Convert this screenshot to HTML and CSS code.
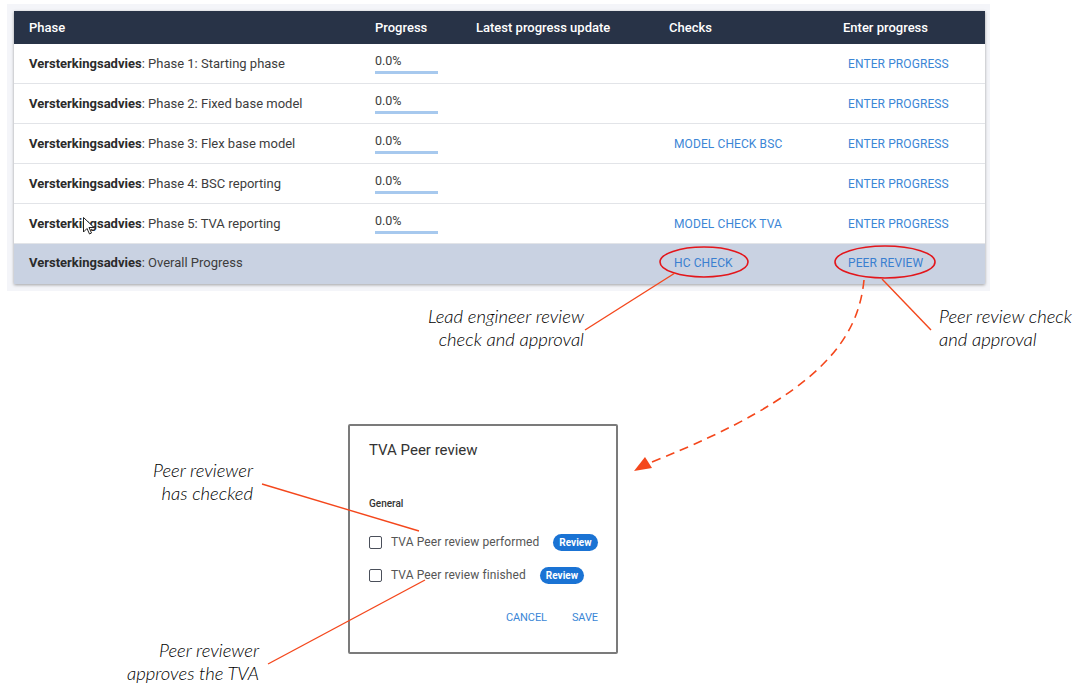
FILE: index.html
```html
<!DOCTYPE html>
<html lang="en">
<head>
<meta charset="utf-8">
<title>Phase progress</title>
<link rel="stylesheet" href="styles.css">
</head>
<body>
<div class="canvas">
  <div class="panel">
    <div class="table">
      <div class="row head">
        <div class="cell">Phase</div>
        <div class="cell">Progress</div>
        <div class="cell">Latest progress update</div>
        <div class="cell">Checks</div>
        <div class="cell">Enter progress</div>
      </div>
      <div class="row">
        <div class="cell"><b>Versterkingsadvies</b>: Phase 1: Starting phase</div>
        <div class="cell prog"><span>0.0%</span><i class="bar"></i></div>
        <div class="cell"></div>
        <div class="cell"></div>
        <div class="cell"><a class="link">ENTER PROGRESS</a></div>
      </div>
      <div class="row">
        <div class="cell"><b>Versterkingsadvies</b>: Phase 2: Fixed base model</div>
        <div class="cell prog"><span>0.0%</span><i class="bar"></i></div>
        <div class="cell"></div>
        <div class="cell"></div>
        <div class="cell"><a class="link">ENTER PROGRESS</a></div>
      </div>
      <div class="row">
        <div class="cell"><b>Versterkingsadvies</b>: Phase 3: Flex base model</div>
        <div class="cell prog"><span>0.0%</span><i class="bar"></i></div>
        <div class="cell"></div>
        <div class="cell"><a class="link">MODEL CHECK BSC</a></div>
        <div class="cell"><a class="link">ENTER PROGRESS</a></div>
      </div>
      <div class="row">
        <div class="cell"><b>Versterkingsadvies</b>: Phase 4: BSC reporting</div>
        <div class="cell prog"><span>0.0%</span><i class="bar"></i></div>
        <div class="cell"></div>
        <div class="cell"></div>
        <div class="cell"><a class="link">ENTER PROGRESS</a></div>
      </div>
      <div class="row">
        <div class="cell"><b>Versterkingsadvies</b>: Phase 5: TVA reporting</div>
        <div class="cell prog"><span>0.0%</span><i class="bar"></i></div>
        <div class="cell"></div>
        <div class="cell"><a class="link">MODEL CHECK TVA</a></div>
        <div class="cell"><a class="link">ENTER PROGRESS</a></div>
      </div>
      <div class="row overall">
        <div class="cell"><b>Versterkingsadvies</b>: Overall Progress</div>
        <div class="cell"></div>
        <div class="cell"></div>
        <div class="cell"><a class="link">HC CHECK</a></div>
        <div class="cell"><a class="link">PEER REVIEW</a></div>
      </div>
    </div>
  </div>

  <div class="dialog">
    <div class="d-title">TVA Peer review</div>
    <div class="d-section">General</div>
    <div class="d-item"><span class="box"></span><span class="d-label">TVA Peer review performed</span><span class="chip">Review</span></div>
    <div class="d-item"><span class="box"></span><span class="d-label">TVA Peer review finished</span><span class="chip">Review</span></div>
    <div class="d-actions"><a class="btn">CANCEL</a><a class="btn">SAVE</a></div>
  </div>

  <div class="note note-lead">Lead engineer review<br>check and approval</div>
  <div class="note note-peer">Peer review check<br>and approval</div>
  <div class="note note-checked">Peer reviewer<br>has checked</div>
  <div class="note note-approves">Peer reviewer<br>approves the TVA</div>

  <svg class="overlay" width="1081" height="693" viewBox="0 0 1081 693" xmlns="http://www.w3.org/2000/svg">
    <ellipse cx="704" cy="262" rx="44" ry="15" fill="none" stroke="#e3161b" stroke-width="1.6"/>
    <ellipse cx="885" cy="262" rx="50" ry="16" fill="none" stroke="#e3161b" stroke-width="1.6"/>
    <g stroke="#f4471c" stroke-width="1.4" fill="none">
      <line x1="675" y1="273" x2="585" y2="330"/>
      <line x1="882" y1="279" x2="931" y2="330"/>
      <line x1="262" y1="484" x2="419" y2="531"/>
      <line x1="268" y1="664" x2="425" y2="580"/>
      <path d="M864 280 C858 340 820 395 652 462" stroke-dasharray="9 6" stroke-width="1.6"/>
    </g>
    <polygon points="634,471 645,457 652,468" fill="#f4471c"/>
    <path d="M83.5 217.5 L83.5 232 L87 228.5 L89.5 234 L91.5 233 L89 227.5 L94 227.5 Z" fill="#fff" stroke="#222" stroke-width="1"/>
  </svg>
</div>
</body>
</html>
```

FILE: styles.css
```css
html, body {
  margin: 0;
  padding: 0;
  background: #ffffff;
}

.canvas {
  position: relative;
  width: 1081px;
  height: 693px;
  overflow: hidden;
  font-family: Roboto, "Liberation Sans", sans-serif;
}

.panel {
  margin: 4px 0 0 7px;
  width: 983px;
  box-sizing: border-box;
  padding: 7px 5px 7px 7px;
  background: #f4f5f9;
}

.table {
  width: 971px;
  background: #fff;
  box-shadow: 0 1px 3px rgba(0, 0, 0, 0.35);
}

.row {
  display: grid;
  grid-template-columns: 346px 101px 193px 174px 157px;
  height: 40px;
  box-sizing: border-box;
  border-bottom: 1px solid #e2e4e8;
  align-items: center;
  font-size: 13px;
  color: #3d3d3d;
}

.cell {
  padding-left: 15px;
  white-space: nowrap;
}

.cell b {
  font-weight: 700;
  color: #2b2b2b;
}

.row.head {
  height: 33px;
  background: #283347;
  color: #ffffff;
  font-weight: 500;
  font-size: 13px;
  border-bottom: none;
}

.row.overall {
  background: #c9d2e2;
  border-bottom: none;
  padding-bottom: 3px;
}

.prog {
  display: flex;
  flex-direction: column;
  padding-top: 5px;
}

.prog span {
  font-size: 12.5px;
  line-height: 14px;
  margin-top: -4px;
}

.bar {
  display: block;
  width: 63px;
  height: 3px;
  margin-top: 3px;
  background: #a7c9ee;
}

.link {
  display: inline-block;
  margin-left: 5px;
  font-size: 12px;
  color: #3b86d6;
  letter-spacing: 0.1px;
}

.overall .link {
  color: #3a7fd0;
}

/* dialog */
.dialog {
  position: absolute;
  left: 348px;
  top: 424px;
  width: 270px;
  height: 230px;
  box-sizing: border-box;
  border: 2px solid #7b7b7b;
  border-radius: 2px;
  background: #fff;
  padding: 14px 18px 0 19px;
  display: flex;
  flex-direction: column;
}

.d-title {
  font-size: 15px;
  color: #333;
  line-height: 20px;
}

.d-section {
  margin-top: 38px;
  font-size: 10px;
  font-weight: 500;
  color: #333;
  line-height: 12px;
}

.d-item {
  display: flex;
  align-items: center;
  height: 18px;
  margin-top: 15px;
}

.d-section + .d-item {
  margin-top: 23px;
}

.box {
  width: 11px;
  height: 11px;
  border: 1.6px solid #4a4f5a;
  border-radius: 2px;
  margin-right: 9px;
  flex: none;
}

.d-label {
  font-size: 12px;
  color: #555;
  letter-spacing: 0.1px;
}

.chip {
  margin-left: 14px;
  background: #1a73d4;
  color: #fff;
  font-size: 10px;
  font-weight: 700;
  padding: 0 6px;
  height: 17px;
  line-height: 17px;
  border-radius: 9px;
}

.d-actions {
  display: flex;
  justify-content: flex-end;
  gap: 25px;
  margin-top: 27px;
}

.btn {
  font-size: 11px;
  color: #3a86d6;
  letter-spacing: -0.1px;
}

/* annotations */
.note {
  position: absolute;
  font-family: Lato, "Open Sans", sans-serif;
  font-style: italic;
  font-weight: 300;
  font-size: 18.5px;
  line-height: 23px;
  color: #000000;
}

.note-lead {
  right: 497px;
  top: 305px;
  text-align: right;
}

.note-peer {
  left: 939px;
  top: 305px;
}

.note-checked {
  right: 828px;
  top: 459px;
  text-align: right;
}

.note-approves {
  right: 822px;
  top: 639px;
  text-align: right;
}

.overlay {
  position: absolute;
  left: 0;
  top: 0;
  pointer-events: none;
}
```
